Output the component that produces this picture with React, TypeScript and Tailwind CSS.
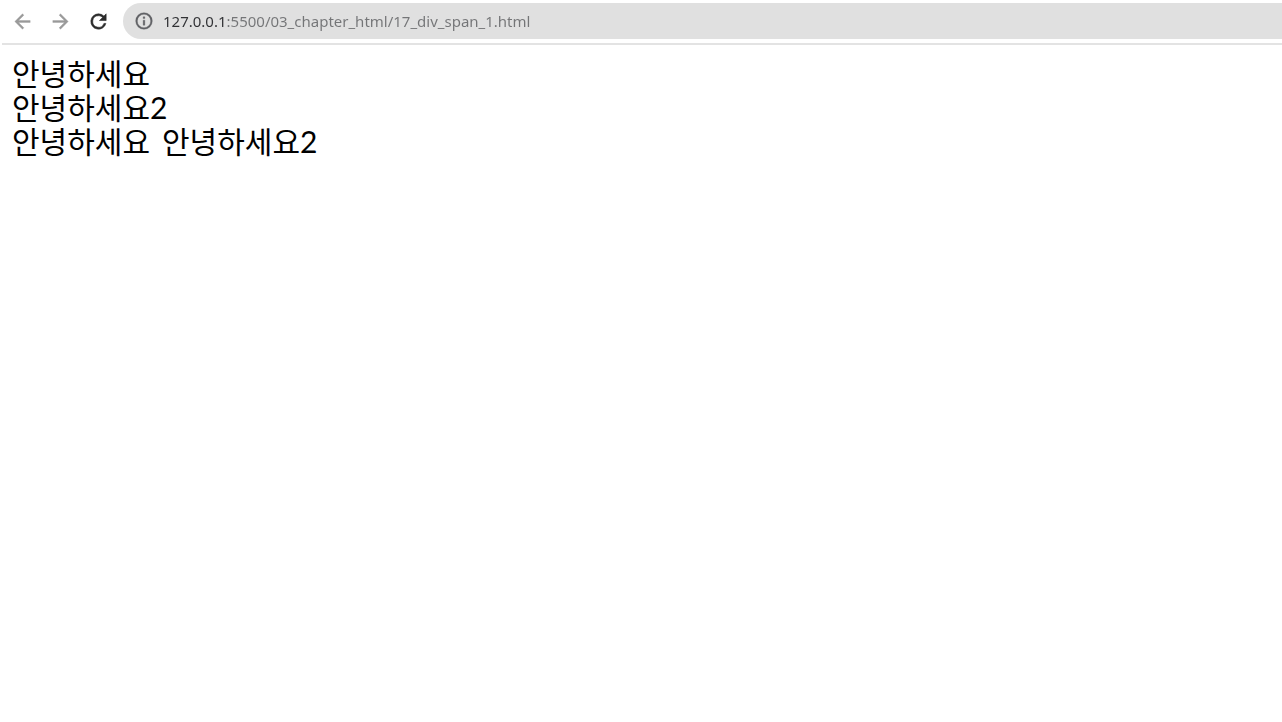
import { useState } from "react";

const HOME_URL = "127.0.0.1:5500/03_chapter_html/17_div_span_1.html";

function Toolbar() {
  const [url, setUrl] = useState(HOME_URL);

  return (
    <header className="ml-0.5 flex items-center border-b-2 border-[#e3e3e3] pt-[3px] pb-1 pl-[5px]">
      <nav className="flex items-center gap-[7px] pr-[9px]">
        <button type="button" aria-label="Back" className="p-1 text-[#9a9a9a]">
          <svg viewBox="0 0 24 24" className="size-[23px]" fill="currentColor" stroke="currentColor" strokeWidth="0.4">
            <path d="M20 11H7.83l5.59-5.59L12 4l-8 8 8 8 1.41-1.41L7.83 13H20v-2z" />
          </svg>
        </button>
        <button type="button" aria-label="Forward" className="p-1 text-[#9a9a9a]">
          <svg viewBox="0 0 24 24" className="size-[23px]" fill="currentColor" stroke="currentColor" strokeWidth="0.4">
            <path d="M12 4l-1.41 1.41L16.17 11H4v2h12.17l-5.58 5.59L12 20l8-8z" />
          </svg>
        </button>
        <button type="button" aria-label="Reload" className="p-1 text-[#2b2b2b]">
          <svg
            viewBox="0 0 24 24"
            className="size-[23px]"
            fill="currentColor"
            stroke="currentColor"
            strokeWidth="0.6"
          >
            <path d="M17.65 6.35A7.96 7.96 0 0 0 12 4a8 8 0 1 0 7.73 10h-2.08A6 6 0 1 1 12 6c1.66 0 3.14.69 4.22 1.78L13 11h7V4l-2.35 2.35z" />
          </svg>
        </button>
      </nav>

      <div className="flex h-9 flex-1 items-center gap-[9px] rounded-l-full bg-[#e0e0e0] pl-[11px]">
        <svg
          viewBox="0 0 24 24"
          className="size-5 shrink-0 text-[#606165]"
          fill="currentColor"
          stroke="currentColor"
          strokeWidth="0.4"
        >
          <path d="M11 7h2v2h-2zm0 4h2v6h-2zm1-9a10 10 0 1 0 0 20 10 10 0 0 0 0-20zm0 18a8 8 0 1 1 0-16 8 8 0 0 1 0 16z" />
        </svg>
        {/* host part is darker than the rest of the address */}
        <input
          type="text"
          aria-label="Address"
          value={url}
          onChange={(e) => setUrl(e.target.value)}
          className="min-w-0 flex-1 bg-[linear-gradient(to_right,#303134_63px,#747577_63px)] bg-clip-text font-['Noto_Sans',sans-serif] text-[15px] leading-5 text-transparent caret-black outline-none"
        />
      </div>
    </header>
  );
}

export default function App() {
  return (
    <div className="min-h-screen bg-white">
      <Toolbar />
      <main className="px-3 py-[11px] font-['Lato','Noto_Sans_CJK_KR',sans-serif] text-[30px] leading-[34px] text-black">
        <div>안녕하세요</div>
        <div>안녕하세요2</div>
        <div className="flex gap-3">
          <span>안녕하세요</span>
          <span>안녕하세요2</span>
        </div>
      </main>
    </div>
  );
}
